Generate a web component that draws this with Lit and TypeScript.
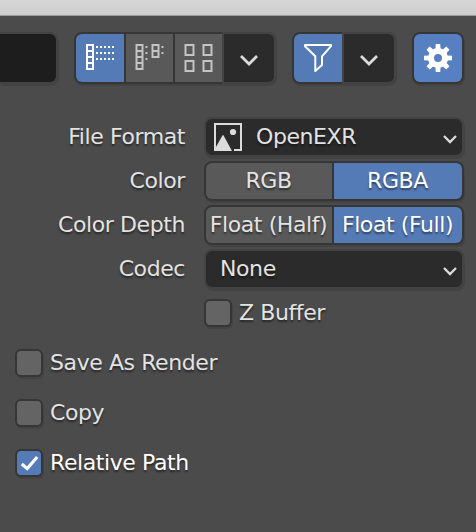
import { LitElement, html, css, svg } from "lit";
import { customElement, property } from "lit/decorators.js";

const dots = (xs: number[], ys: number[]) =>
  ys.flatMap((y) => xs.map((x) => svg`<rect x=${x} y=${y} width="2" height="2"/>`));

const chevron = (w: number, sw: number) => html`
  <svg width=${w * 2 + 4} height=${w + 4} viewBox="0 0 ${w * 2 + 4} ${w + 4}">
    <path d="M2 2 L${w + 2} ${w + 2} L${w * 2 + 2} 2" fill="none" stroke="#dcdcdc" stroke-width=${sw} />
  </svg>`;

const listIcon = html`<svg width="28" height="28" viewBox="0 0 28 28" fill="#fff">
  <path fill-rule="evenodd" d="M0 0H8V26H0Z M2 2V6H6V2Z M2 8V12H6V8Z M2 14V18H6V14Z M2 20V24H6V20Z"/>
  ${dots([10, 14, 18, 22, 26], [2, 8, 14])}
</svg>`;

const columnsIcon = html`<svg width="29" height="28" viewBox="0 0 29 28" fill="#c4c4c4">
  <path fill-rule="evenodd" d="M.5 0H8.5V26H.5Z M2.5 2V6H6.5V2Z M2.5 8V12H6.5V8Z M2.5 14V18H6.5V14Z M2.5 20V24H6.5V20Z
    M16.5 0H24.5V14H16.5Z M18.5 2V6H22.5V2Z M18.5 8V12H22.5V8Z"/>
  ${dots([10.5], [2, 8, 14])} ${dots([26.5], [2, 8])}
</svg>`;

const gridIcon = html`<svg width="29" height="28" viewBox="0 0 29 28" fill="none" stroke="#c4c4c4" stroke-width="2">
  <path d="M1.5 1H9.5V11H1.5Z M19.5 1H27.5V11H19.5Z M1.5 17H9.5V27H1.5Z M19.5 17H27.5V27H19.5Z"/>
</svg>`;

const funnelIcon = html`<svg width="28" height="28" viewBox="0 0 28 28" fill="none" stroke="#fff" stroke-width="2" stroke-linejoin="round">
  <path d="M1 1H27V2.2L18 12.3V21L11.3 27V12.3L1 2.2Z"/>
</svg>`;

const gearIcon = html`<svg width="28" height="28" viewBox="-14 -14 28 28" fill="none" stroke="#fff">
  <circle r="7" stroke-width="6"/>
  ${[0, 45, 90, 135, 180, 225, 270, 315].map(
    (a) => svg`<path d="M-2.6 -9 L-2.2 -14 H2.2 L2.6 -9Z" fill="#fff" stroke="none" transform="rotate(${a})"/>`
  )}
</svg>`;

const imageIcon = html`<svg width="28" height="28" viewBox="0 0 28 28" fill="#dcdcdc">
  <path d="M0 28V0H28V28H20V26H26V2H2V24L8.4 12.4Q9 11.4 9.6 12.4L18 28Z"/>
  <circle cx="19" cy="9" r="3.1"/>
</svg>`;

@customElement("check-item")
export class CheckItem extends LitElement {
  @property() label = "";
  @property({ type: Boolean, reflect: true }) checked = false;
  static styles = css`
    :host { display: flex; align-items: center; height: 28px; color: #e3e3e3; }
    :host([checked]) { color: #fff; }
    .box {
      box-sizing: border-box; width: 28px; height: 28px; margin-right: 7px; flex: none;
      border: 2px solid #363636; border-radius: 6px; background: #646464;
      box-shadow: 1px 2px 0 #434343; display: flex; align-items: center; justify-content: center;
    }
    :host([checked]) .box { background: #557bb7; }
  `;
  render() {
    return html`<span class="box">${this.checked
      ? html`<svg width="24" height="24" viewBox="0 0 24 24"><path d="M4.8 13 L10.2 17.6 L20.2 6" fill="none" stroke="#fff" stroke-width="3.2"/></svg>`
      : ""}</span><span>${this.label}</span>`;
  }
}

@customElement("app-root")
export class AppRoot extends LitElement {
  static styles = css`
    :host {
      display: flex; flex-direction: column; height: 532px; overflow: hidden; background: #4b4b4b;
      font: 22px/28px "DejaVu Sans", sans-serif; letter-spacing: -.41px; color: #e3e3e3; white-space: nowrap;
      text-shadow: 0 2px 2px rgba(0, 0, 0, .5);
    }
    svg { display: block; flex: none; }
    .top { height: 15px; flex: none; background: linear-gradient(#d6d6d6, #cdcdcd); border-bottom: 1px solid #9c9c9c; }
    .bar { display: flex; padding: 16px 12px 0 0; height: 52px; }
    .field {
      box-sizing: border-box; width: 58px; height: 52px; background: #1d1d1d; border: 2px solid #434343;
      border-left: 0; border-radius: 0 8px 8px 0; box-shadow: 1px 2px 0 #434343;
    }
    .group {
      box-sizing: border-box; display: flex; gap: 2px; border: 2px solid #363636; border-radius: 8px;
      background: #363636; box-shadow: 1px 2px 0 #434343; height: 52px;
    }
    .g1 { margin-left: 16px; width: 202px; }
    .g2 { margin-left: 16px; width: 104px; }
    .g3 { margin-left: 16px; width: 52px; }
    .cell { display: flex; align-items: center; justify-content: center; background: #595959; width: 47px; }
    .cell:first-child { border-radius: 6px 0 0 6px; }
    .cell:last-child { border-radius: 0 6px 6px 0; }
    .cell:only-child { border-radius: 6px; }
    .wide { width: 48px; }
    .on { background: #557bb7; color: #fff; }
    .gear { background: #5680c2; }
    .drop { flex: 1; background: #2b2b2b; box-shadow: 0 0 0 2px #434343; }
    .drop svg { margin: 4px 1px 0 0; }
    .props {
      display: grid; grid-template-columns: 185px 260px; grid-auto-rows: 40px; row-gap: 4px; column-gap: 19px;
      align-items: center; margin-top: 33px;
    }
    .label { text-align: right; }
    .toggle { height: 40px; }
    .toggle .cell { width: 126px; }
    .toggle .cell + .cell { width: 128px; }
    .toggle span { margin-right: 1px; }
    .select {
      box-sizing: border-box; height: 40px; border: 2px solid #434343; border-radius: 8px; background: #2b2b2b;
      box-shadow: 1px 2px 0 #434343; display: flex; align-items: center; padding: 0 4px 0 14px;
      justify-content: space-between;
    }
    .pic { padding-left: 8px; }
    .value { display: flex; align-items: center; gap: 14px; }
    .select > svg { margin-top: 3px; }
    .zbuf { grid-column: 2; }
    .checks { display: flex; flex-direction: column; gap: 22px; padding: 16px 0 0 15px; }
  `;
  render() {
    return html`
      <div class="top"></div>
      <div class="bar">
        <div class="field"></div>
        <div class="group g1">
          <div class="cell wide on">${listIcon}</div>
          <div class="cell">${columnsIcon}</div>
          <div class="cell">${gridIcon}</div>
          <div class="cell drop">${chevron(8, 2.7)}</div>
        </div>
        <div class="group g2">
          <div class="cell wide on">${funnelIcon}</div>
          <div class="cell drop">${chevron(8, 2.7)}</div>
        </div>
        <div class="group g3"><div class="cell wide gear">${gearIcon}</div></div>
      </div>
      <div class="props">
        <div class="label">File Format</div>
        <div class="select pic"><span class="value">${imageIcon}<span>OpenEXR</span></span>${chevron(6, 2.3)}</div>
        <div class="label">Color</div>
        <div class="group toggle"><div class="cell"><span>RGB</span></div><div class="cell on"><span>RGBA</span></div></div>
        <div class="label">Color Depth</div>
        <div class="group toggle"><div class="cell"><span>Float (Half)</span></div><div class="cell on"><span>Float (Full)</span></div></div>
        <div class="label">Codec</div>
        <div class="select"><span>None</span>${chevron(6, 2.3)}</div>
        <check-item class="zbuf" label="Z Buffer"></check-item>
      </div>
      <div class="checks">
        <check-item label="Save As Render"></check-item>
        <check-item label="Copy"></check-item>
        <check-item label="Relative Path" checked></check-item>
      </div>
    `;
  }
}
